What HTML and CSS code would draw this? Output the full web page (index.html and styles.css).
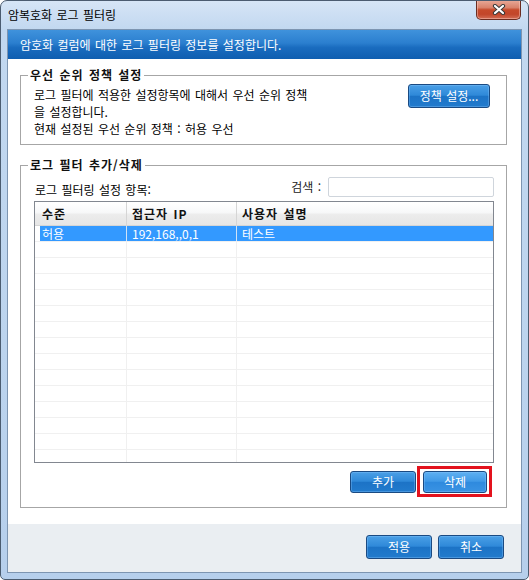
FILE: index.html
```html
<!DOCTYPE html>
<html lang="ko">
<head>
<meta charset="utf-8">
<title>암복호화 로그 필터링</title>
<link rel="stylesheet" href="styles.css">
</head>
<body>
<div class="window">
  <div class="titlebar">
    <span class="title">암복호화 로그 필터링</span>
    <button class="close" aria-label="닫기">
      <svg width="14" height="11" viewBox="0 0 14 11">
        <path d="M3 2 L11 9 M11 2 L3 9" stroke="#3a3a3a" stroke-width="4.2" stroke-linecap="round"/>
        <path d="M3 2 L11 9 M11 2 L3 9" stroke="#ffffff" stroke-width="2.2" stroke-linecap="round"/>
      </svg>
    </button>
  </div>
  <div class="client">
    <div class="banner">암호화 컬럼에 대한 로그 필터링 정보를 설정합니다.</div>
    <div class="content">
      <fieldset class="group group-policy">
        <legend>우선 순위 정책 설정</legend>
        <div class="policy-row">
          <div class="policy-text">
            <p class="line">로그 필터에 적용한 설정항목에 대해서 우선 순위 정책<br>을 설정합니다.</p>
            <p class="line current">현재 설정된 우선 순위 정책 : 허용 우선</p>
          </div>
          <button class="btn btn-policy">정책 설정...</button>
        </div>
      </fieldset>
      <fieldset class="group group-filter">
        <legend>로그 필터 추가/삭제</legend>
        <div class="search-row">
          <span class="list-label">로그 필터링 설정 항목:</span>
          <span class="search-label">검색 :</span>
          <input class="search-input" type="text">
        </div>
        <div class="list">
          <div class="row head">
            <div class="c c1">수준</div>
            <div class="c c2">접근자 IP</div>
            <div class="c c3">사용자 설명</div>
          </div>
          <div class="row sel">
            <div class="c c1"><span>허용</span></div>
            <div class="c c2">192,168,,0,1</div>
            <div class="c c3">테스트</div>
          </div>
          <div class="row"><div class="c c1"></div><div class="c c2"></div><div class="c c3"></div></div>
          <div class="row"><div class="c c1"></div><div class="c c2"></div><div class="c c3"></div></div>
          <div class="row"><div class="c c1"></div><div class="c c2"></div><div class="c c3"></div></div>
          <div class="row"><div class="c c1"></div><div class="c c2"></div><div class="c c3"></div></div>
          <div class="row"><div class="c c1"></div><div class="c c2"></div><div class="c c3"></div></div>
          <div class="row"><div class="c c1"></div><div class="c c2"></div><div class="c c3"></div></div>
          <div class="row"><div class="c c1"></div><div class="c c2"></div><div class="c c3"></div></div>
          <div class="row"><div class="c c1"></div><div class="c c2"></div><div class="c c3"></div></div>
          <div class="row"><div class="c c1"></div><div class="c c2"></div><div class="c c3"></div></div>
          <div class="row"><div class="c c1"></div><div class="c c2"></div><div class="c c3"></div></div>
          <div class="row"><div class="c c1"></div><div class="c c2"></div><div class="c c3"></div></div>
          <div class="row"><div class="c c1"></div><div class="c c2"></div><div class="c c3"></div></div>
          <div class="row"><div class="c c1"></div><div class="c c2"></div><div class="c c3"></div></div>
          <div class="row"><div class="c c1"></div><div class="c c2"></div><div class="c c3"></div></div>
        </div>
        <div class="list-actions">
          <button class="btn btn-add">추가</button>
          <span class="highlight"><button class="btn btn-del">삭제</button></span>
        </div>
      </fieldset>
    </div>
    <div class="footer">
      <button class="btn btn-foot">적용</button>
      <button class="btn btn-foot">취소</button>
    </div>
  </div>
</div>
</body>
</html>
```

FILE: styles.css
```css
* { box-sizing: border-box; }

html, body {
  margin: 0;
  padding: 0;
  background: #ffffff;
}

body {
  font-family: "Noto Sans CJK KR", "Noto Sans", "Liberation Sans", sans-serif;
  font-size: 12px;
  color: #000;
  word-spacing: 1px;
}

.window {
  width: 529px;
  height: 580px;
  border: 1px solid #4b5c70;
  border-radius: 7px 7px 5px 5px;
  background: linear-gradient(to bottom, #d6e5f6 0, #c2d8f0 28px, #bcd4ee 60%, #b6cfec 100%);
  padding: 0 6px 7px 6px;
  display: flex;
  flex-direction: column;
  overflow: hidden;
}

.titlebar {
  height: 28px;
  flex: none;
  display: flex;
  align-items: center;
  padding-left: 1px;
}

.title {
  line-height: 14px;
  color: #000;
}

.close {
  margin-left: auto;
  margin-right: 1px;
  align-self: flex-start;
  margin-top: -1px;
  width: 45px;
  height: 20px;
  padding: 0;
  border: 1px solid #6b2d21;
  border-top: none;
  border-radius: 0 0 5px 5px;
  background: linear-gradient(to bottom, #e9ab9a 0%, #d9826b 40%, #c64a2b 52%, #c2462a 75%, #d26d55 100%);
  display: flex;
  align-items: center;
  justify-content: center;
  box-shadow: inset 0 0 0 1px rgba(255, 210, 200, 0.45);
}

.client {
  flex: 1;
  display: flex;
  flex-direction: column;
  border: 1px solid #7d95b1;
  background: #ffffff;
}

.banner {
  height: 29px;
  flex: none;
  line-height: 29px;
  padding-left: 12px;
  color: #ffffff;
  background: linear-gradient(to bottom, #3f92dc 0%, #2b7fcf 45%, #1a6cbf 60%, #0f5eb0 100%);
}

.content {
  flex: 1;
  display: flex;
  flex-direction: column;
  gap: 13px;
  padding: 9px 14px 16px 12px;
}

.group {
  margin: 0;
  border: 1px solid #a6a6a6;
  padding: 0;
  min-width: 0;
}

.group legend {
  margin-left: -6px;
  padding: 0 2px;
  font-weight: bold;
  letter-spacing: 1px;
  line-height: 14px;
  color: #111;
}

.group-policy {
  padding: 4px 16px 7px 13px;
}

.policy-row {
  display: flex;
  align-items: flex-start;
}

.policy-text .line {
  margin: 0;
  line-height: 17px;
}

.btn {
  font-family: inherit;
  font-size: 12px;
  word-spacing: 1px;
  color: #ffffff;
  border: 1px solid #1a4a82;
  border-radius: 3px;
  background: linear-gradient(to bottom, #4a9fe6 0%, #2f89d9 46%, #1c73c6 52%, #227bcd 100%);
  box-shadow: inset 0 0 0 1px rgba(140, 200, 255, 0.35);
  padding: 0;
  line-height: 1;
}

.btn-policy {
  margin-left: auto;
  margin-top: -2px;
  width: 82px;
  height: 24px;
}

.group-filter {
  padding: 5px 12px 10px 13px;
}

.search-row {
  display: flex;
  align-items: flex-end;
  height: 20px;
}

.list-label {
  padding-left: 1px;
  line-height: 14px;
}

.search-label {
  margin-left: auto;
  margin-right: 7px;
  line-height: 14px;
  align-self: center;
  color: #222;
}

.search-input {
  width: 166px;
  height: 20px;
  border: 1px solid #cfd5dc;
  border-radius: 2px;
  background: #fff;
  margin: 0;
  padding: 0 3px;
  font-family: inherit;
  font-size: 12px;
}

.list {
  margin-top: 4px;
  height: 262px;
  border: 1px solid #828790;
  background: #ffffff;
  overflow: hidden;
}

.row {
  display: grid;
  grid-template-columns: 92px 110px 1fr;
  height: 16px;
  border-bottom: 1px solid #f0f0f0;
}

.row .c {
  border-right: 1px solid #f0f0f0;
  padding-left: 5px;
  line-height: 15px;
  white-space: nowrap;
  overflow: hidden;
}

.row .c3 { border-right: none; }

.row .c1 { padding-left: 7px; }

.row.head {
  height: 24px;
  border-bottom: 1px solid #d5d5d5;
  background: linear-gradient(to bottom, #ffffff 0%, #f7f8f9 45%, #ececec 55%, #e6e6e6 100%);
}

.row.head .c {
  border-right: 1px solid #d5d5d5;
  font-weight: bold;
  letter-spacing: 1px;
  line-height: 23px;
  color: #111;
}

.row.head .c3 { border-right: none; }

.row.sel {
  color: #ffffff;
  border-bottom: 1px solid #f0f0f0;
}

.row.sel .c {
  background: #3399ff;
  border-right-color: #cfe3f7;
}

.row.sel .c1 {
  background: linear-gradient(to right, #ffffff 5px, #3399ff 5px);
}

.list-actions {
  display: flex;
  justify-content: flex-end;
  align-items: flex-start;
  margin-top: 3px;
  padding-right: 2px;
}

.btn-add {
  margin-top: 5px;
  margin-right: 1px;
  width: 66px;
  height: 22px;
}

.highlight {
  display: flex;
  border: 3px solid #e3121d;
  padding: 2px 2px 1px 3px;
}

.btn-del {
  width: 64px;
  height: 22px;
  background: linear-gradient(to bottom, #5eb0f1 0%, #419ae7 46%, #2f8ade 52%, #3a93e3 100%);
}

.footer {
  height: 48px;
  flex: none;
  display: flex;
  justify-content: flex-end;
  align-items: flex-start;
  gap: 6px;
  padding: 11px 17px 0 0;
  background: #eaeef2;
}

.btn-foot {
  width: 66px;
  height: 24px;
}
```
